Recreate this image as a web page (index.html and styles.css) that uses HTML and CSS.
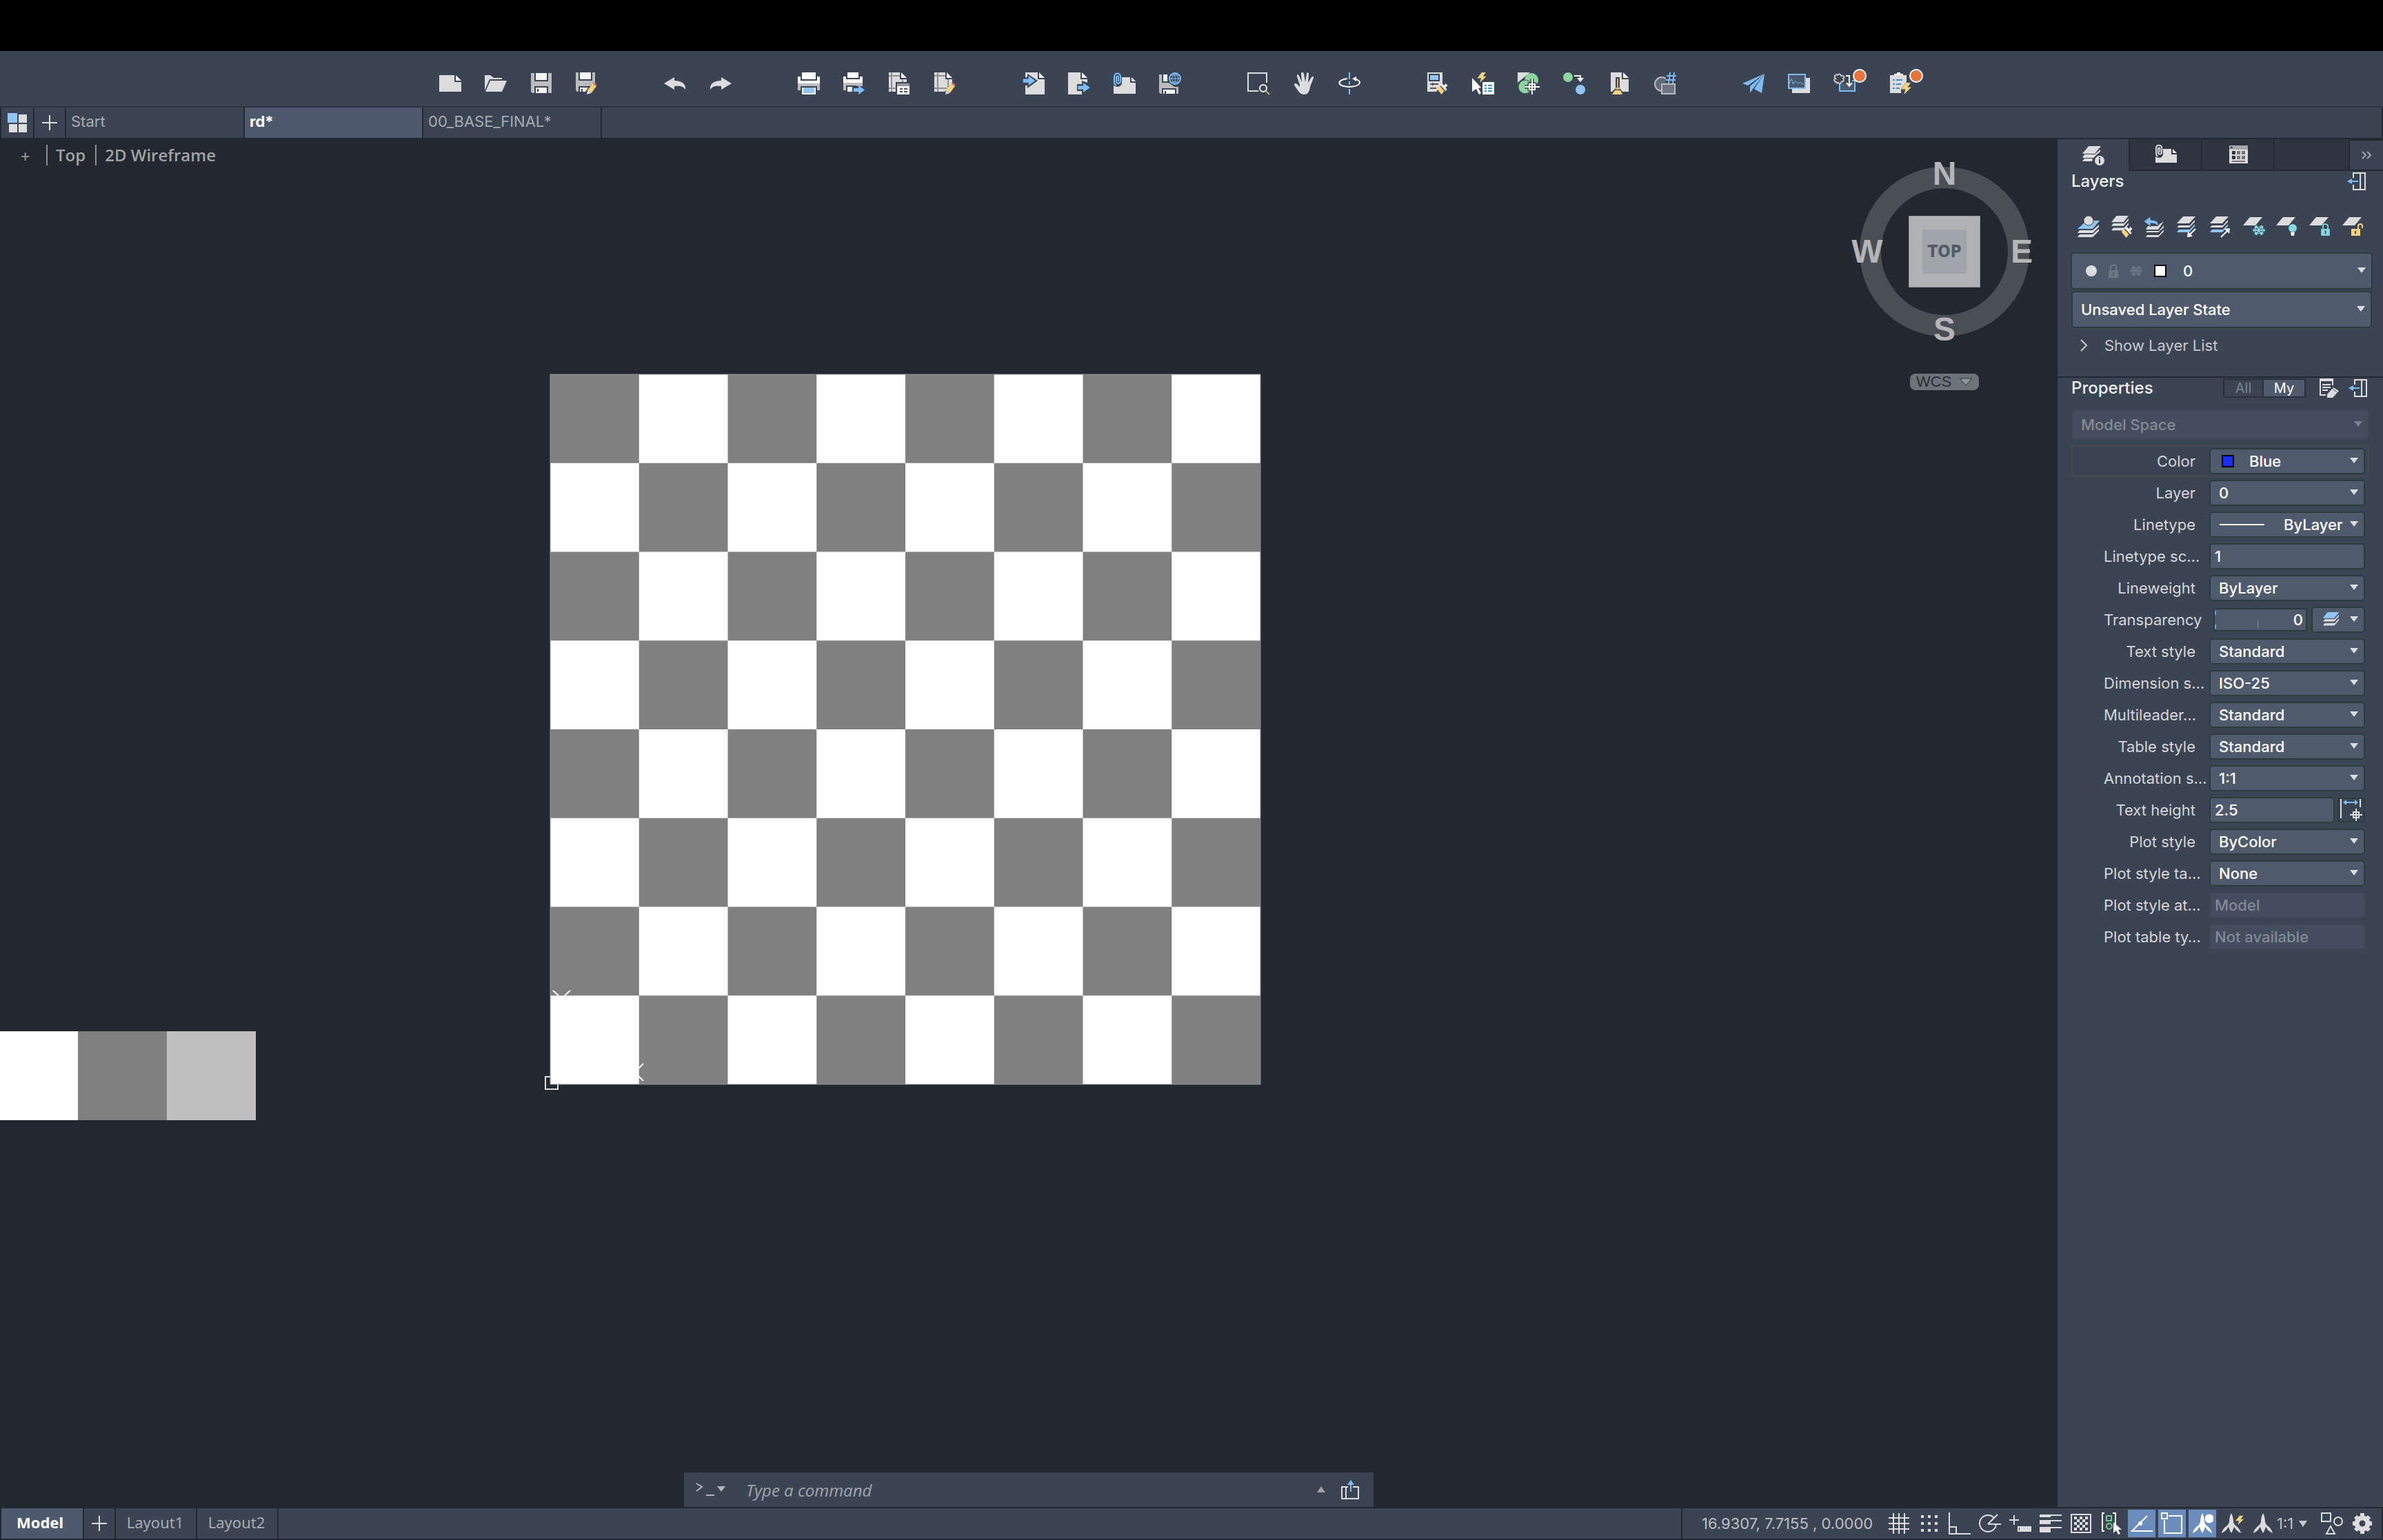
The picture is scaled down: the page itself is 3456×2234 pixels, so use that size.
FILE: index.html
```
<!DOCTYPE html>
<html lang="en">
<head>
    <meta charset="UTF-8">
    <meta name="viewport" content="width=device-width, initial-scale=1.0">
    <title>rd*</title>
    <link rel="stylesheet" href="styles.css">
</head>
<body>

    <!-- Shared icon shapes -->
    <svg class="defs" aria-hidden="true">
        <symbol id="pencil" viewBox="0 0 16 16">
            <path d="M2 10L9 1l5 4-7 9z" fill="#f8d27c"/>
            <path d="M9 1c2-2 7 1 5 4z" fill="#e8605a"/>
            <path d="M2 10l5 4-6 2z" fill="#dcdcdc"/>
        </symbol>
        <symbol id="brush" viewBox="0 0 16 16">
            <path d="M0 7l4-4 7 8-4 5z" fill="#f8d27c"/>
            <path d="M5 2l3-2 3 3 2-3 3 3-3 3 2 3-2 2z" fill="#f4f4f4"/>
        </symbol>
        <symbol id="bolt" viewBox="0 0 14 16">
            <path d="M7 0h6L9 6h5L4 16l2-7H0z" fill="#f8d27c"/>
        </symbol>
        <symbol id="arrow" viewBox="0 0 20 16">
            <path d="M0 5h9V0l11 8-11 8v-5H0z" fill="#7dbdf8"/>
        </symbol>
        <symbol id="clip" viewBox="0 0 12 20">
            <path d="M7 13V7c0-2-3-2-3 0v5c0 5 6 5 6 0V6c0-6-9-6-9 0v8c0 2 1 4 3 5" fill="none" stroke="currentColor" stroke-width="2"/>
        </symbol>
        <symbol id="dock" viewBox="0 0 28 28">
            <path d="M9 9V2h17v24H9v-7M19 2v24" fill="none" stroke="#dcdcdc" stroke-width="2"/>
            <path d="M16 14H5" stroke="#7dbdf8" stroke-width="2"/>
            <path d="M0 14l7-4v8z" fill="#7dbdf8"/>
        </symbol>
        <symbol id="flake" viewBox="0 0 18 18">
            <path d="M0 9h18M5 2l8 14M13 2L5 16" fill="none" stroke="currentColor" stroke-width="2"/>
            <circle cx="9" cy="9" r="5" fill="none" stroke="currentColor" stroke-width="1"/>
            <path d="M3 3l4 1-3 3zM15 3l-4 1 3 3zM3 15l4-1-3-3zM15 15l-4-1 3-3zM2 6v6M16 6v6" fill="currentColor" stroke="currentColor" stroke-width="1"/>
        </symbol>
        <symbol id="lock" viewBox="0 0 14 20">
            <path d="M3 9V5c0-5 8-5 8 0v4" fill="none" stroke="currentColor" stroke-width="2"/>
            <path d="M0 9h14v11H0zM6 12v5h2v-5z" fill="currentColor" fill-rule="evenodd"/>
        </symbol>
        <symbol id="stack" viewBox="0 0 28 26">
            <path d="M8 0h19l-8 10H0z" fill="#dcdcdc"/>
            <path d="M3 12h17l7-8v3l-8 9H0zM3 19h17l7-8v3l-8 9H0z" fill="#dcdcdc"/>
        </symbol>
        <symbol id="annot" viewBox="0 0 32 32">
            <path d="M16 1c2 4 3 8 3 13l2 4c4 3 8 7 9 12-4-2-7-4-9-8l-1-1c-1 3-2 6-4 9-2-3-3-6-4-9l-1 1c-2 4-5 6-9 8 1-5 5-9 9-12l2-4c0-5 1-9 3-13z" fill="currentColor"/>
        </symbol>
    </svg>

    <div class="screen-top"></div>

    <header class="toolbar">
        <div class="tool-group">
            <button class="tool" title="New"><svg viewBox="0 0 32 32"><path d="M0 4h22v10h10v14H0z" fill="#dcdcdc"/><path d="M24 4l8 8h-8z" fill="#f4f4f4"/></svg></button>
            <button class="tool" title="Open"><svg viewBox="0 0 32 32"><path d="M0 4h8l5 4h12v2H7L0 26zM8 12h24l-7 16H1z" fill="#dcdcdc"/></svg></button>
            <button class="tool" title="Save"><svg viewBox="0 0 32 32"><path d="M1 1h5v12h20V1h5v29h-5V20H6v10H3l-2-2z" fill="#bcbcbc"/><path d="M8 1h16v10H8zM8 22h16v8H8z" fill="#f4f4f4"/><path d="M10 24h2v4h-2z" fill="#3b4453"/></svg></button>
            <button class="tool" title="Save As"><svg viewBox="0 0 32 32"><path d="M0 0h4v12h20V0h4v16l-8 4H4v8H2l-2-2z" fill="#bcbcbc"/><path d="M6 0h16v10H6zM6 22h12l-4 6H6z" fill="#f4f4f4"/><path d="M8 24h2v4H8z" fill="#3b4453"/><use href="#pencil" x="15" y="15" width="17" height="17"/></svg></button>
        </div>
        <div class="tool-group">
            <button class="tool" title="Undo"><svg viewBox="0 0 32 32"><path d="M0 16L15 7v5c11 0 17 5 16 13-3-5-8-6-16-5v5z" fill="#dcdcdc"/></svg></button>
            <button class="tool" title="Redo"><svg viewBox="0 0 32 32"><path d="M32 16L17 7v5C6 12 0 17 1 25c3-5 8-6 16-5v5z" fill="#dcdcdc"/></svg></button>
        </div>
        <div class="tool-group">
            <button class="tool" title="Plot"><svg viewBox="0 0 32 32"><path d="M6 0h20v10H6zM0 6h4v6h24V6h4v10H0z" fill="#fff"/><path d="M0 16h32v10h-4v-6H4v6H0z" fill="#bcbcbc"/><path d="M6 22h20v10H6z" fill="#fff"/><path d="M8 22h16v8H8z" fill="#8fc6f7"/></svg></button>
            <button class="tool" title="Batch Plot"><svg viewBox="0 0 32 32"><path d="M6 0h16v8H6zM0 6h4v4h20V6h4v9H0z" fill="#fff"/><path d="M0 15h28v5h-6l-4-1H4v7H0z" fill="#bcbcbc"/><path d="M6 21h7v7H6z" fill="#eee"/><use href="#arrow" x="14" y="19" width="18" height="13"/></svg></button>
            <button class="tool" title="Page Setup"><svg viewBox="0 0 32 32"><path d="M0 0h16v10h10v4H10v14H0z" fill="#dcdcdc"/><path d="M18 0l8 8h-8z" fill="#f4f4f4"/><path d="M4 0v28M0 5h16M0 23h10M20 10v4" stroke="#8f8f8f" stroke-width="2"/><path d="M12 16h18v4H12z" fill="#999"/><path d="M12 20h18v12H12z" fill="#f4f4f4"/><path d="M16 24h4M22 24h5M16 28h4M22 28h5" stroke="#555" stroke-width="2"/></svg></button>
            <button class="tool" title="Edit Page"><svg viewBox="0 0 32 32"><path d="M0 0h16v10h10v6L15 28H0z" fill="#dcdcdc"/><path d="M18 0l8 8h-8z" fill="#f4f4f4"/><path d="M5 0v28M0 5h16M0 23h18M20 10v12" stroke="#8f8f8f" stroke-width="2"/><use href="#pencil" x="15" y="15" width="17" height="17"/></svg></button>
        </div>
        <div class="tool-group">
            <button class="tool" title="Import"><svg viewBox="0 0 32 32"><path d="M4 0h18v10h10v22H4V19h3v4l15-11L7 2v5H4z" fill="#dcdcdc"/><path d="M24 0l8 8h-8z" fill="#f4f4f4"/><use href="#arrow" x="0" y="5" width="19" height="14"/></svg></button>
            <button class="tool" title="Export"><svg viewBox="0 0 32 32"><path d="M0 0h18v10h10v5l-8-3v5h-7v10h7v5H0z" fill="#dcdcdc"/><path d="M20 0l8 8h-8z" fill="#f4f4f4"/><use href="#arrow" x="14" y="15" width="18" height="14"/></svg></button>
            <button class="tool" title="Attach"><svg viewBox="0 0 32 32"><path d="M12 7h12v8h8v16H0V19c6 4 12 1 12-4z" fill="#dcdcdc"/><path d="M26 7l6 6h-6z" fill="#f4f4f4"/><use href="#clip" class="blue" x="0" y="0" width="12" height="20"/></svg></button>
            <button class="tool" title="Save to Web"><svg viewBox="0 0 32 32"><path d="M0 3h4v12h10l8 6h6v10h-3v-8H4v8H2l-2-2z" fill="#bcbcbc"/><path d="M6 3h6v10H6zM6 25h17v6H6z" fill="#f4f4f4"/><path d="M8 27h2v4H8z" fill="#3b4453"/><circle cx="23" cy="9" r="8" fill="#3b4453" stroke="#7dbdf8" stroke-width="2"/><path d="M15 9h16M23 1v16M17 4h12M17 14h12M23 1c-6 5-6 11 0 16M23 1c6 5 6 11 0 16" fill="none" stroke="#7dbdf8" stroke-width="1"/></svg></button>
        </div>
        <div class="tool-group">
            <button class="tool" title="Zoom"><svg viewBox="0 0 32 32"><path d="M16 27H1V1h27v14" fill="none" stroke="#dcdcdc" stroke-width="2"/><circle cx="23" cy="23" r="5" fill="none" stroke="#f4f4f4" stroke-width="2"/><path d="M27 27l5 5" stroke="#d2ab6f" stroke-width="2"/></svg></button>
            <button class="tool" title="Pan"><svg viewBox="0 0 32 32"><path d="M10 18L6 6c-1-3 2-4 3-1l4 9-1-12c0-3 3-3 4 0l2 12 2-12c0-3 4-2 3 1l-1 12 5-8c2-2 4-1 3 1l-5 13c-1 8-4 11-9 11-6 0-8-5-13-12-3-4 1-5 3-3l4 4z" fill="#dcdcdc"/></svg></button>
            <button class="tool" title="Orbit"><svg viewBox="0 0 32 32"><path d="M16 0v10M16 13v5M16 24v8" stroke="#7dbdf8" stroke-width="2"/><path d="M13 9C-3 11-3 20 16 21c18-1 19-9 7-12" fill="none" stroke="#fff" stroke-width="2"/><path d="M20 9l6-3v7z" fill="#fff"/></svg></button>
        </div>
        <div class="tool-group">
            <button class="tool" title="Properties"><svg viewBox="0 0 32 32"><path d="M1 0h22v16l-9 12H1z" fill="#dcdcdc"/><path d="M4 3h14v9H4z" fill="#8fc6f7" stroke="#3b4453" stroke-width="2"/><path d="M5 17h12M5 23h9M9 15v4" stroke="#555" stroke-width="2"/><use href="#brush" x="14" y="16" width="17" height="16"/></svg></button>
            <button class="tool" title="Quick Select"><svg viewBox="0 0 32 32"><path d="M0 8l13 14-4 1 4 7-3 2-4-8-6 4z" fill="#fff"/><use href="#bolt" x="6" y="0" width="16" height="15"/><path d="M15 14h17v18H15z" fill="#fff"/><path d="M18 19h3M23 19h6M18 23h3M23 23h6M18 27h3M23 27h6" stroke="#3d8be0" stroke-width="2"/></svg></button>
            <button class="tool" title="Insert Block"><svg viewBox="0 0 32 32"><path d="M0 0h18L0 15z" fill="#dcdcdc"/><circle cx="20" cy="11" r="10" fill="#8bd69d"/><circle cx="11" cy="21" r="10" fill="#8bd69d" stroke="#3b4453"/><path d="M21 9v23M10 21h22M17 17h8v8h-8z" fill="none" stroke="#3b4453" stroke-width="5"/><path d="M21 9v23M10 21h22M17 17h8v8h-8z" fill="none" stroke="#fff" stroke-width="2"/></svg></button>
            <button class="tool" title="Replace"><svg viewBox="0 0 32 32"><circle cx="7" cy="7" r="7" fill="#8bd69d"/><circle cx="25" cy="25" r="7" fill="#8fc6f7"/><path d="M16 5h9v5" fill="none" stroke="#fff" stroke-width="2"/><path d="M20 8h10l-5 6z" fill="#fff"/></svg></button>
            <button class="tool" title="Purge"><svg viewBox="0 0 32 32"><path d="M3 0h16v10h10v18h-9l-4-5V7h-6v16l-5 5H3z" fill="#dcdcdc"/><path d="M21 0l8 8h-8z" fill="#f4f4f4"/><path d="M12 9h2v13h-2zM10 22h6v3h-6z" fill="#d2ab6f"/><path d="M9 26h8l3 6H5z" fill="#f8d27c"/></svg></button>
            <button class="tool" title="Count"><svg viewBox="0 0 32 32"><circle cx="11" cy="17" r="10" fill="#626a78" stroke="#bcbcbc" stroke-width="2"/><path d="M11 17h19v14H11z" fill="#6c7482" stroke="#bcbcbc" stroke-width="2"/><path d="M17 0h15v16H17z" fill="#3b4453"/><path d="M23 0l-2 16M29 0l-2 16M18 5h14M17 11h14" stroke="#7dbdf8" stroke-width="2"/></svg></button>
        </div>
        <div class="tool-group">
            <button class="tool" title="Share"><svg viewBox="0 0 32 32"><path d="M32 2L0 16l8 3zM32 2L11 20v10l4-6zM32 2L17 24l11 6z" fill="#7dbdf8"/></svg></button>
            <button class="tool" title="Activity"><svg viewBox="0 0 32 32"><path d="M6 8h26v22H6z" fill="#dcdcdc"/><path d="M1 3h24v20H1z" fill="#4b576b" stroke="#7dbdf8" stroke-width="2"/><path d="M2 17l2-7c2-2 3 8 4 7s1-6 3-4 2 4 5 2 3 2 7 2" fill="none" stroke="#7dbdf8" stroke-width="1"/></svg></button>
            <button class="tool badged" title="Markup Import"><svg viewBox="0 0 32 32"><path d="M9 16v11h22V12h-4" fill="none" stroke="#7dbdf8" stroke-width="2"/><path d="M10 16h20v10H10z" fill="#4b5b72"/><path d="M4 14c-4-1-3-5-1-5-3-3 0-7 3-5 2-3 5-1 5 1 4-1 6 2 3 4 2 2 1 5-2 4-1 4-5 4-5 1-1 2-3 2-3 0z" fill="#3b4453" stroke="#c4c4c4" stroke-width="2"/><path d="M18 5h5v14M19 15l4 5 4-5" fill="none" stroke="#fff" stroke-width="2"/></svg><span class="badge"></span></button>
            <button class="tool badged" title="Markup Assist"><svg viewBox="0 0 32 32"><path d="M0 4h24v10l-8 10v6H0z" fill="#dcdcdc"/><path d="M6 4V2h4V0h5v2h4v2z" fill="#fff"/><path d="M4 11h3M9 11h9M4 17h3M9 17h7M4 23h3M9 23h5" stroke="#3d8be0" stroke-width="2"/><use href="#bolt" x="16" y="15" width="15" height="17"/></svg><span class="badge"></span></button>
        </div>
    </header>

    <nav class="file-tabs">
        <button class="tab-icon" title="Files"><svg viewBox="0 0 28 28"><path d="M0 0h14v14H0z" fill="#8fc6f7"/><path d="M16 2h12v12H16zM2 16h12v12H2zM16 16h12v12H16z" fill="#dcdcdc"/></svg></button>
        <button class="tab-icon" title="New tab"><svg viewBox="0 0 24 24"><path d="M12 1v22M1 12h22" stroke="#dcdcdc" stroke-width="2"/></svg></button>
        <button class="file-tab">Start</button>
        <button class="file-tab active">rd*</button>
        <button class="file-tab">00_BASE_FINAL*</button>
        <div class="tab-rest"></div>
    </nav>

    <div class="workspace">
        <main class="canvas">
            <svg class="drawing">
                <defs>
                    <pattern id="squares" width="2" height="2" patternUnits="userSpaceOnUse">
                        <path d="M0 0h2v2H0z" fill="#fff"/>
                        <path d="M0 0h1v1H0zM1 1h1v1H1z" fill="#808080"/>
                    </pattern>
                </defs>
                <g transform="translate(0 -202)">
                    <svg x="798" y="543" width="1030" height="1030" viewBox="0 0 8 8">
                        <path d="M0 0h8v8H0z" fill="url(#squares)"/>
                    </svg>
                    <path d="M798 543h1030v1030H798z" fill="none" stroke="#8d9196" stroke-width="1"/>
                    <path d="M0 1496h113v129H0z" fill="#fff"/>
                    <path d="M113 1496h129v129H113z" fill="#808080"/>
                    <path d="M242 1496h129v129H242z" fill="#c0c0c0"/>
                    <!-- UCS icon -->
                    <path d="M802 1437l8 7M827 1437l-8 7M933 1543l-7 7M926 1561l7 7" stroke="#fff" stroke-width="2"/>
                    <path d="M798 1562h-7v18h18v-7" fill="none" stroke="#dcdcdc" stroke-width="2"/>
                </g>
            </svg>

            <div class="view-controls">
                <button class="view-plus">+</button>
                <button class="view-item">Top</button>
                <button class="view-item">2D Wireframe</button>
            </div>

            <div class="viewcube">
                <div class="compass">
                    <span class="north">N</span>
                    <span class="west">W</span>
                    <button class="cube"><span class="cube-face">TOP</span></button>
                    <span class="east">E</span>
                    <span class="south">S</span>
                </div>
                <button class="wcs">WCS <svg viewBox="0 0 20 14"><path d="M1 2h18L10 12z" fill="#8b979b" stroke="#2d353d" stroke-width="1"/></svg></button>
            </div>

            <div class="command-bar">
                <button class="prompt" title="Recent commands"><svg viewBox="0 0 44 24"><path d="M1 3l8 5-8 6M15 20h12" fill="none" stroke="#b4b4b4" stroke-width="2"/><path d="M31 7h12l-6 8z" fill="#b4b4b4"/></svg></button>
                <input type="text" class="command-input" aria-label="Command" placeholder="Type a command">
                <button class="history" title="History"><svg viewBox="0 0 12 10"><path d="M0 9h12L6 0z" fill="#a0a0a0"/></svg></button>
                <button class="undock" title="Undock"><svg viewBox="0 0 28 28"><path d="M11 10H2v17h24V10h-8M8 10v17" fill="none" stroke="#dcdcdc" stroke-width="2"/><path d="M15 17V5" stroke="#7dbdf8" stroke-width="2"/><path d="M15 0l5 7H10z" fill="#7dbdf8"/></svg></button>
            </div>
        </main>

        <aside class="panel">
            <div class="panel-tabs">
                <button class="panel-tab active" title="Properties"><svg viewBox="0 0 32 32"><path d="M9 3h18l-9 11H0zM3 15h15l8-7v3l-6 5-4 4H0zM3 21h12l-1 4H0z" fill="#dcdcdc"/><circle cx="25" cy="24" r="7" fill="#dcdcdc"/><path d="M24 19h2v2h-2zM24 22h2v6h-2z" fill="#3b4453"/></svg></button>
                <button class="panel-tab" title="References"><svg viewBox="0 0 32 32"><path d="M12 8h12v8h8v12H1v-9c6 4 11 1 11-4z" fill="#dcdcdc"/><path d="M26 8l6 6h-6z" fill="#f4f4f4"/><use href="#clip" x="1" y="1" width="11" height="19" color="#dcdcdc"/></svg></button>
                <button class="panel-tab" title="Content"><svg viewBox="0 0 32 32"><path d="M3 3h27v6H3z" fill="#a8a8a8"/><path d="M5 5h3v2H5z" fill="#2f3441"/><path d="M3 9h27v20H3z" fill="#dcdcdc"/><path d="M7 11h5v5H7zM7 18h5v5H7z" fill="#2f3441"/><path d="M14 11h5v5h-5zM21 11h5v5h-5zM14 18h5v5h-5zM21 18h5v5h-5zM7 25h19v2H7z" fill="#777"/></svg></button>
                <div class="panel-tab blank"></div>
                <button class="panel-more" title="More"><svg viewBox="0 0 16 12"><path d="M2 1l5 5-5 5M9 1l5 5-5 5" fill="none" stroke="#a0a5ad" stroke-width="2"/></svg></button>
            </div>

            <section class="layers">
                <div class="section-head">
                    <h2>Layers</h2>
                    <button class="dock" title="Dock"><svg><use href="#dock"/></svg></button>
                </div>
                <div class="layer-tools">
                    <button class="tool" title="Make Current"><svg viewBox="0 0 32 32"><path d="M10 7h22l-10 12H0l9-8z" fill="#8fc6f7"/><circle cx="16" cy="7" r="7" fill="#dcdcdc" stroke="#3b4453" stroke-width="1"/><path d="M3 21h19l9-8v3l-9 9H0zM3 27h19l9-8v3l-9 9H0z" fill="#dcdcdc"/></svg></button>
                    <button class="tool" title="Match Layer"><svg viewBox="0 0 32 32"><use href="#stack" x="0" y="0" width="28" height="24"/><use href="#brush" x="15" y="16" width="17" height="16"/></svg></button>
                    <button class="tool" title="Previous"><svg viewBox="0 0 32 32"><path d="M6 15h13l10-7-8 12H3zM5 22h17l7-8v3l-8 7H3zM5 28h17l7-8v3l-8 8H3z" fill="#dcdcdc"/><path d="M0 8l10-7v5c8 0 12 3 11 9-3-3-6-4-11-4v5z" fill="#7dbdf8" stroke="#3b4453" stroke-width="1"/></svg></button>
                    <button class="tool" title="Isolate"><svg viewBox="0 0 32 32"><path d="M9 1h18l-9 10H0zM3 14h16l7-8v3l-8 8H0z" fill="#dcdcdc"/><path d="M3 20h16l7-8v3l-8 9H0z" fill="#8fc6f7"/><path d="M27 19L17 29" stroke="#fff" stroke-width="2"/><path d="M15 31l1-8 7 7z" fill="#fff"/></svg></button>
                    <button class="tool" title="Unisolate"><svg viewBox="0 0 32 32"><path d="M9 1h18l-9 10H0zM3 14h16l7-8v3l-8 8H0z" fill="#dcdcdc"/><path d="M3 20h16l7-8v3l-8 9H0z" fill="#8fc6f7"/><path d="M16 31l10-10" stroke="#fff" stroke-width="2"/><path d="M29 18l-1 8-7-7z" fill="#fff"/></svg></button>
                    <button class="tool" title="Freeze"><svg viewBox="0 0 32 32"><path d="M10 2h18L18 14H0z" fill="#dcdcdc"/><use href="#flake" x="14" y="12" width="18" height="18" color="#86d6e0"/></svg></button>
                    <button class="tool" title="Off"><svg viewBox="0 0 32 32"><path d="M10 2h18L18 14H0z" fill="#dcdcdc"/><circle cx="24" cy="18" r="6" fill="#86d6e0"/><path d="M21 24h6l-1 5h-4z" fill="#fff"/></svg></button>
                    <button class="tool" title="Lock"><svg viewBox="0 0 32 32"><path d="M10 2h18L18 14H0z" fill="#dcdcdc"/><use href="#lock" x="17" y="11" width="13" height="18" color="#86d6e0"/></svg></button>
                    <button class="tool" title="Unlock"><svg viewBox="0 0 32 32"><path d="M10 2h18L18 14H0z" fill="#dcdcdc"/><path d="M13 19h13v10H13zM18 22v4h2v-4z" fill="#f8d27c" fill-rule="evenodd"/><path d="M23 19v-4c0-4 6-4 6 0v3" fill="none" stroke="#f8d27c" stroke-width="2"/></svg></button>
                </div>
                <div class="select tall layer-select">
                    <div class="layer-state">
                        <svg class="i-dot" viewBox="0 0 16 16"><circle cx="8" cy="8" r="8" fill="#dcdcdc"/></svg>
                        <svg class="i-lock"><use href="#lock"/></svg>
                        <svg class="i-flake"><use href="#flake"/></svg>
                        <span class="swatch white"></span>
                    </div>
                    <select aria-label="Current layer"><option>0</option></select>
                </div>
                <div class="select tall state-select">
                    <select aria-label="Layer state"><option>Unsaved Layer State</option></select>
                </div>
                <button class="show-list"><svg viewBox="0 0 12 18"><path d="M2 1l8 8-8 8" fill="none" stroke="#c6c8cc" stroke-width="2"/></svg>Show Layer List</button>
            </section>

            <section class="properties">
                <div class="section-head">
                    <h2>Properties</h2>
                    <div class="toggle">
                        <button>All</button>
                        <button class="on">My</button>
                    </div>
                    <button class="dock" title="Customize"><svg viewBox="0 0 28 28"><path d="M9 24H1V1h18v9" fill="none" stroke="#dcdcdc" stroke-width="2"/><path d="M0 0h20v4H0zM4 8h12v2H4zM4 12h12v2H4zM4 16h8v2H4z" fill="#dcdcdc"/><path d="M11 28v-5l9-10 8 5-9 10z" fill="#dcdcdc"/><path d="M18 14l7 6" stroke="#3b4453" stroke-width="1"/></svg></button>
                    <button class="dock" title="Dock"><svg><use href="#dock"/></svg></button>
                </div>
                <div class="select space-select disabled">
                    <select aria-label="Space" disabled><option>Model Space</option></select>
                </div>

                <form class="props">
                    <div class="prop focus"><label for="color">Color</label><div class="select has-swatch"><span class="swatch blue-fill"></span><select id="color"><option>Blue</option></select></div></div>
                    <div class="prop"><label for="layer">Layer</label><div class="select"><select id="layer"><option>0</option></select></div></div>
                    <div class="prop"><label for="linetype">Linetype</label><div class="select has-line"><span class="line"></span><select id="linetype"><option>ByLayer</option></select></div></div>
                    <div class="prop"><label for="ltscale">Linetype sc…</label><input type="text" id="ltscale" value="1"></div>
                    <div class="prop"><label for="lineweight">Lineweight</label><div class="select"><select id="lineweight"><option>ByLayer</option></select></div></div>
                    <div class="prop"><label for="transparency">Transparency</label>
                        <input type="text" id="transparency" class="amount" value="0">
                        <button type="button" class="by-layer" title="Transparency source"><svg viewBox="0 0 28 26"><use href="#stack" width="28" height="26"/><path d="M8 0h19l-8 10H0z" fill="#8fc6f7"/></svg></button>
                    </div>
                    <div class="prop"><label for="textstyle">Text style</label><div class="select"><select id="textstyle"><option>Standard</option></select></div></div>
                    <div class="prop"><label for="dimstyle">Dimension s…</label><div class="select"><select id="dimstyle"><option>ISO-25</option></select></div></div>
                    <div class="prop"><label for="mleader">Multileader…</label><div class="select"><select id="mleader"><option>Standard</option></select></div></div>
                    <div class="prop"><label for="tablestyle">Table style</label><div class="select"><select id="tablestyle"><option>Standard</option></select></div></div>
                    <div class="prop"><label for="annoscale">Annotation s…</label><div class="select"><select id="annoscale"><option>1:1</option></select></div></div>
                    <div class="prop"><label for="textheight">Text height</label>
                        <input type="text" id="textheight" value="2.5">
                        <button type="button" class="pick" title="Pick height"><svg viewBox="0 0 36 32"><path d="M3 0v28M31 0v12" stroke="#dcdcdc" stroke-width="2"/><path d="M8 5h18" stroke="#7dbdf8" stroke-width="2"/><path d="M6 5l5-4v8zM28 5l-5-4v8z" fill="#7dbdf8"/><path d="M25 14v18M16 23h18M21 19h8v8h-8z" fill="none" stroke="#dcdcdc" stroke-width="2"/></svg></button>
                    </div>
                    <div class="prop"><label for="plotstyle">Plot style</label><div class="select"><select id="plotstyle"><option>ByColor</option></select></div></div>
                    <div class="prop"><label for="plottable">Plot style ta…</label><div class="select"><select id="plottable"><option>None</option></select></div></div>
                    <div class="prop"><label for="plotattached">Plot style at…</label><input type="text" id="plotattached" value="Model" disabled></div>
                    <div class="prop"><label for="plottype">Plot table ty…</label><input type="text" id="plottype" value="Not available" disabled></div>
                </form>
            </section>
        </aside>
    </div>

    <footer class="status-bar">
        <button class="layout model">Model</button>
        <button class="layout add" title="New layout"><svg viewBox="0 0 24 24"><path d="M12 1v22M1 12h22" stroke="#dcdcdc" stroke-width="2"/></svg></button>
        <button class="layout">Layout1</button>
        <button class="layout">Layout2</button>
        <div class="layout-rest"></div>
        <div class="status-tools">
            <span class="coords">16.9307, 7.7155 , 0.0000</span>
            <button class="status" title="Grid"><svg viewBox="0 0 32 32"><path d="M8 1v30M16 1v30M24 1v30M1 8h30M1 16h30M1 24h30" stroke="#dcdcdc" stroke-width="2"/></svg></button>
            <button class="status" title="Snap"><svg viewBox="0 0 32 32"><path d="M4 6h25M4 16h25M4 26h25" stroke="#dcdcdc" stroke-width="4" stroke-dasharray="4 6"/></svg></button>
            <button class="status" title="Ortho"><svg viewBox="0 0 32 32"><path d="M1 0v31h31M1 21h10v10" fill="none" stroke="#dcdcdc" stroke-width="2"/></svg></button>
            <button class="status" title="Polar"><svg viewBox="0 0 32 32"><path d="M22 8A12 12 0 1 0 25 17M13 17L27 3M13 17h19" fill="none" stroke="#dcdcdc" stroke-width="2"/></svg></button>
            <button class="status" title="Dynamic Input"><svg viewBox="0 0 32 32"><path d="M7 4v14M0 11h14" stroke="#dcdcdc" stroke-width="2"/><path d="M12 20h20v8H12z" fill="#dcdcdc"/><path d="M14 22h1v4h-1z" fill="#3b4453"/></svg></button>
            <button class="status" title="Lineweight"><svg viewBox="0 0 32 32"><path d="M0 3h32v2H16v2H0zM0 11h32v2H16v4H0zM0 21h32v2H16v6H0z" fill="#dcdcdc"/></svg></button>
            <button class="status" title="Transparency"><svg viewBox="0 0 32 32"><path d="M2 3h28v26H2z" fill="none" stroke="#dcdcdc" stroke-width="2"/><path d="M6 8h20M6 16h20M6 24h20" stroke="#dcdcdc" stroke-width="4" stroke-dasharray="4 4"/><path d="M10 12h16M10 20h16" stroke="#dcdcdc" stroke-width="4" stroke-dasharray="4 4"/></svg></button>
            <button class="status" title="Selection Cycling"><svg viewBox="0 0 32 32"><path d="M6 1H3v26h3M18 1h4v18" fill="none" stroke="#f4f4f4" stroke-width="2"/><path d="M9 5h7v7H9z" fill="none" stroke="#6fcf86" stroke-width="2"/><circle cx="13" cy="20" r="4" fill="none" stroke="#6fcf86" stroke-width="2"/><path d="M19 14l12 11h-5l3 6-3 1-3-6-4 4z" fill="#fff"/></svg></button>
            <button class="status on" title="Object Snap Tracking"><svg viewBox="0 0 32 32"><path d="M24 5L2 27h30" fill="none" stroke="#fff" stroke-width="2"/><circle cx="14" cy="16" r="3" fill="#fff"/></svg></button>
            <button class="status on" title="Object Snap"><svg viewBox="0 0 32 32"><path d="M5 11v19h25V5H11" fill="none" stroke="#fff" stroke-width="2"/><path d="M1 1h8v8H1z" fill="none" stroke="#fff" stroke-width="2"/></svg></button>
            <button class="status on" title="Annotation Visibility"><svg viewBox="0 0 32 32"><use href="#annot" x="0" y="0" width="32" height="32"/><circle cx="26" cy="9" r="7" fill="#fff" stroke="#6a8dbc" stroke-width="1"/></svg></button>
            <button class="status" title="Auto Scale"><svg viewBox="0 0 32 32"><use href="#annot" x="-2" y="0" width="32" height="32"/><use href="#bolt" x="20" y="3" width="12" height="17"/></svg></button>
            <button class="status" title="Annotation Scale"><svg viewBox="0 0 32 32"><use href="#annot"/></svg></button>
            <button class="scale">1:1 <svg viewBox="0 0 12 9"><path d="M0 0h12L6 9z" fill="#c6c8cc"/></svg></button>
            <button class="status" title="Isolate Objects"><svg viewBox="0 0 32 32"><path d="M1 1h13v12H1z" fill="none" stroke="#dcdcdc" stroke-width="2"/><circle cx="25" cy="13" r="6" fill="none" stroke="#dcdcdc" stroke-width="2"/><path d="M14 20l6 11H8z" fill="none" stroke="#dcdcdc" stroke-width="2"/></svg></button>
            <button class="status" title="Customize"><svg viewBox="0 0 32 32"><circle cx="16" cy="16" r="8" fill="none" stroke="#dcdcdc" stroke-width="7"/><path d="M16 1v5M16 26v5M2 16h5M25 16h5M6 6l4 4M22 22l4 4M26 6l-4 4M10 22l-4 4" stroke="#dcdcdc" stroke-width="6"/></svg></button>
        </div>
    </footer>

</body>
</html>
```
FILE: styles.css
```
*,
*::before {
    box-sizing: border-box;
}

body {
    margin: 0;
    min-height: 100vh;
    display: flex;
    flex-direction: column;
    background: #222830;
    color: #d4d5d8;
    font-family: Inter, "Liberation Sans", sans-serif;
    font-size: 22px;
}

button,
input,
select {
    margin: 0;
    padding: 0;
    border: 0;
    background: none;
    color: inherit;
    font: inherit;
}

svg {
    display: block;
}

.defs {
    position: absolute;
    width: 0;
    height: 0;
}

.blue {
    color: #7dbdf8;
}

/* Top of the screen and main toolbar */
.screen-top {
    height: 74px;
    background: #000;
}

.toolbar {
    display: flex;
    justify-content: center;
    align-items: center;
    gap: 96px;
    height: 82px;
    padding: 14px 30px 0 0;
    background: #3b4453;
    border-bottom: 2px solid #2c333f;
}

.tool-group {
    display: flex;
    gap: 34px;
}

.tool {
    position: relative;
    width: 32px;
    height: 32px;
}

.tool svg {
    width: 32px;
    height: 32px;
    overflow: visible;
}

.tool.badged {
    width: 48px;
}

.badge {
    position: absolute;
    top: -5px;
    right: 0;
    width: 20px;
    height: 20px;
    border: 2px solid #fff;
    border-radius: 50%;
    background: #e8743b;
}

/* File tabs */
.file-tabs {
    display: flex;
    gap: 2px;
    height: 46px;
    padding: 0 2px 2px;
}

.tab-icon {
    display: flex;
    align-items: center;
    justify-content: center;
    width: 46px;
    background: #3b4453;
}

.tab-icon svg {
    width: 28px;
    height: 28px;
}

.tab-icon + .tab-icon svg {
    width: 24px;
    height: 24px;
}

.tab-icon + .tab-icon {
    width: 44px;
}

.file-tab {
    width: 257px;
    padding: 0 7px 4px;
    background: #3b4453;
    color: #a7abb2;
    text-align: left;
}

.file-tab.active {
    background: #4e596d;
    color: #fff;
    font-weight: 700;
}

.tab-rest {
    flex: 1;
    background: #3b4453;
}

/* Drawing area */
.workspace {
    flex: 1;
    display: flex;
    padding-bottom: 2px;
}

.canvas {
    flex: 1;
    position: relative;
    overflow: hidden;
    background: #212830;
}

.drawing {
    position: absolute;
    inset: 0;
    width: 100%;
    height: 100%;
}

.view-controls {
    position: absolute;
    top: 8px;
    left: 24px;
    display: flex;
    color: #a0a2a4;
    font-family: "Open Sans", sans-serif;
    font-size: 24px;
    font-weight: 600;
}

.view-plus {
    width: 43px;
    padding-right: 18px;
    font-weight: 400;
}

.view-item {
    height: 30px;
    padding: 0 14px 0 12px;
    border-left: 2px solid #8e9092;
    line-height: 30px;
}

.viewcube {
    position: absolute;
    top: 24px;
    right: 36px;
    display: flex;
    flex-direction: column;
    align-items: center;
    width: 256px;
    color: #b4b5b7;
    font-family: "Liberation Sans", sans-serif;
}

.compass {
    position: relative;
    display: grid;
    grid-template-columns: 48px 104px 48px;
    grid-template-rows: 48px 104px 48px;
    gap: 37px 36px;
    justify-content: center;
    align-content: center;
    justify-items: center;
    align-items: center;
    height: 278px;
    font-size: 48px;
    font-weight: 700;
    line-height: 48px;
}

.compass::before {
    content: "";
    position: absolute;
    top: 16px;
    left: 13px;
    width: 246px;
    height: 246px;
    border: 31px solid #4a4f55;
    border-radius: 50%;
}

.compass span,
.cube {
    position: relative;
}

.north,
.south {
    grid-column: 2;
}

.west {
    grid-column: 1;
}

.cube {
    display: flex;
    align-items: center;
    justify-content: center;
    width: 104px;
    height: 104px;
    border: 1px solid #8f9193;
    background: #b1b2b4;
}

.cube-face {
    width: 64px;
    height: 64px;
    background: #a0a4ab;
    color: #525a64;
    font-family: "Liberation Sans Narrow", "DejaVu Sans Condensed", "Liberation Sans", sans-serif;
    font-size: 24px;
    font-weight: 700;
    line-height: 64px;
}

.wcs {
    display: flex;
    align-items: center;
    justify-content: space-between;
    width: 100px;
    height: 24px;
    margin-top: 38px;
    padding: 0 9px;
    border-radius: 8px;
    background: #6c747a;
    color: #262e36;
    line-height: 24px;
}

.wcs svg {
    width: 20px;
    height: 14px;
}

.command-bar {
    position: absolute;
    right: 0;
    bottom: 0;
    left: 0;
    display: flex;
    align-items: center;
    width: 1000px;
    height: 50px;
    margin: 0 auto;
    padding: 0 20px 0 17px;
    background: #3b4453;
}

.prompt svg {
    width: 44px;
    height: 24px;
}

.command-input {
    flex: 1;
    padding-left: 29px;
    outline: 0;
    font-family: "Open Sans", sans-serif;
    font-size: 24px;
    font-style: italic;
}

.command-input::placeholder {
    color: #a1a6ad;
}

.history svg {
    width: 12px;
    height: 10px;
}

.undock {
    margin-left: 22px;
}

.undock svg {
    width: 28px;
    height: 28px;
}

/* Right panel */
.panel {
    width: 472px;
    background: #3b4453;
}

.panel-tabs {
    display: flex;
    gap: 2px;
    height: 46px;
    background: #242a33;
    padding-bottom: 2px;
}

.panel-tab {
    display: flex;
    align-items: center;
    justify-content: center;
    width: 103px;
    background: #2f3441;
}

.panel-tab svg {
    width: 32px;
    height: 32px;
}

.panel-tab.active {
    height: 46px;
    background: #3b4453;
}

.panel-tab.blank {
    flex: 1;
}

.panel-more {
    display: flex;
    align-items: center;
    justify-content: center;
    width: 48px;
    margin-top: 2px;
    background: #3b4453;
}

.panel-more svg {
    width: 16px;
    height: 12px;
}

.layers {
    height: 300px;
    border-bottom: 2px solid #242a33;
}

.section-head {
    display: flex;
    align-items: center;
    height: 30px;
    padding: 0 24px 0 20px;
}

.properties .section-head {
    padding-right: 22px;
}

.section-head h2 {
    flex: 1;
    margin: 0;
    color: #eceded;
    font-size: 24px;
    font-weight: 500;
    line-height: 30px;
}

.dock svg {
    width: 28px;
    height: 28px;
}

.dock + .dock {
    margin-left: 14px;
}

.layer-tools {
    display: flex;
    gap: 16px;
    padding: 35px 28px 21px 29px;
}

/* Drop-downs and text boxes */
.select {
    position: relative;
    flex: 1;
    display: flex;
    align-items: center;
    height: 38px;
    border: 2px solid #2d3b3d;
    border-radius: 5px;
    background: #505a6d;
    color: #fff;
    font-weight: 500;
}

.select::after,
.by-layer::after {
    content: "";
    position: absolute;
    top: 50%;
    right: 8px;
    margin-top: -5px;
    border: 6px solid transparent;
    border-top: 8px solid #dcdcdc;
    border-bottom: 0;
}

.select select {
    width: 100%;
    height: 100%;
    padding-left: 12px;
    appearance: none;
    outline: 0;
}

.select.tall {
    height: 54px;
}

.layer-select {
    margin: 0 15px 2px 19px;
}

.state-select {
    margin: 0 16px 0 20px;
}

.layer-state {
    display: flex;
    align-items: center;
    gap: 17px;
    padding-left: 20px;
    color: #6d7685;
}

.i-dot {
    width: 16px;
    height: 16px;
}

.i-lock {
    width: 14px;
    height: 20px;
}

.i-flake {
    width: 18px;
    height: 18px;
}

.layer-state + select {
    padding-left: 24px;
}

.swatch {
    flex: none;
    width: 18px;
    height: 18px;
    border: 2px solid #000;
}

.white {
    background: #fff;
}

.blue-fill {
    background: #1a2ff5;
}

.has-swatch {
    padding-left: 16px;
}

.has-swatch select {
    padding-left: 22px;
}

.has-line {
    padding-left: 13px;
}

.has-line select {
    padding-left: 28px;
}

.line {
    flex: none;
    width: 65px;
    height: 2px;
    background: #fff;
}

.disabled {
    border-color: #3d4854;
    background: #444d5e;
    color: #838a96;
}

.disabled::after {
    border-top-color: #7a818d;
}

.select select:disabled {
    opacity: 1;
}

.space-select {
    height: 44px;
    margin: 16px 20px 8px;
}

.show-list {
    display: flex;
    align-items: center;
    gap: 24px;
    margin: 10px 32px;
    color: #c6c8cc;
    line-height: 30px;
}

.show-list svg {
    width: 12px;
    height: 18px;
}

.toggle {
    display: flex;
    margin-right: 20px;
    border: 2px solid #2a303b;
}

.toggle button {
    width: 55px;
    color: #7e8591;
    font-size: 20px;
    line-height: 24px;
}

.toggle .on {
    width: 61px;
    border-left: 2px solid #2a303b;
    background: #505a6d;
    color: #fff;
}

/* Property rows */
.prop {
    display: flex;
    align-items: center;
    height: 46px;
    margin: 0 20px;
    padding: 4px 6px 4px 47px;
}

.prop.focus {
    padding: 2px 4px 2px 45px;
    border: 2px solid #464950;
}

.prop label {
    width: 133px;
    margin-right: 20px;
    text-align: right;
    white-space: nowrap;
}

.prop input {
    flex: 1;
    min-width: 0;
    height: 38px;
    padding-left: 6px;
    border: 2px solid #2d3b3d;
    border-radius: 5px;
    outline: 0;
    background: #505a6d;
    color: #fff;
    font-weight: 500;
}

.prop input:disabled {
    border-color: #3d4854;
    background: #444d5e;
    color: #838a96;
}

.prop .amount {
    height: 34px;
    margin-left: 6px;
    padding-right: 4px;
    border-radius: 0;
    background:
        linear-gradient(#8a919c, #8a919c) 62px 16px / 1px 12px no-repeat,
        linear-gradient(#6a9cf0, #6a9cf0) 0 2px / 2px 6px no-repeat,
        linear-gradient(#6a9cf0, #6a9cf0) 0 22px / 2px 6px no-repeat,
        #505a6d;
    text-align: right;
}

.by-layer {
    position: relative;
    width: 78px;
    height: 38px;
    margin-left: 6px;
    padding-left: 14px;
    border: 2px solid #2d3b3d;
    border-radius: 5px;
    background: #505a6d;
}

.by-layer svg {
    width: 26px;
    height: 22px;
}

.pick {
    width: 40px;
    height: 36px;
    margin-left: 4px;
    border: 2px solid #2d3b3d;
    border-radius: 4px;
}

.pick svg {
    width: 36px;
    height: 32px;
}

/* Status bar */
.status-bar {
    display: flex;
    gap: 2px;
    height: 46px;
    padding: 0 2px 2px;
}

.layout {
    width: 116px;
    padding: 0 2px 4px 0;
    background: #3b4453;
    color: #a7abb2;
    font-family: "Noto Sans", sans-serif;
}

.layout.model {
    width: 118px;
    padding-right: 6px;
    background: #4e596d;
    color: #fff;
    font-weight: 700;
}

.layout.add {
    display: flex;
    align-items: center;
    justify-content: center;
    width: 44px;
    padding: 0;
}

.add svg {
    width: 24px;
    height: 24px;
}

.layout-rest {
    flex: 1;
    background: #3b4453;
}

.status-tools {
    display: flex;
    align-items: center;
    gap: 4px;
    padding: 0 8px 0 28px;
    background: #3b4453;
}

.coords {
    width: 262px;
    color: #bcbfc3;
    white-space: nowrap;
}

.status {
    display: flex;
    align-items: center;
    justify-content: center;
    width: 40px;
    height: 40px;
    color: #dcdcdc;
}

.status.on {
    background: #6a8dbc;
    color: #fff;
}

.status svg {
    width: 32px;
    height: 32px;
}

.scale {
    display: flex;
    align-items: center;
    gap: 8px;
    width: 52px;
    margin-right: 4px;
    margin-left: -4px;
    color: #bcbfc3;
}

.scale svg {
    width: 12px;
    height: 9px;
}
```
